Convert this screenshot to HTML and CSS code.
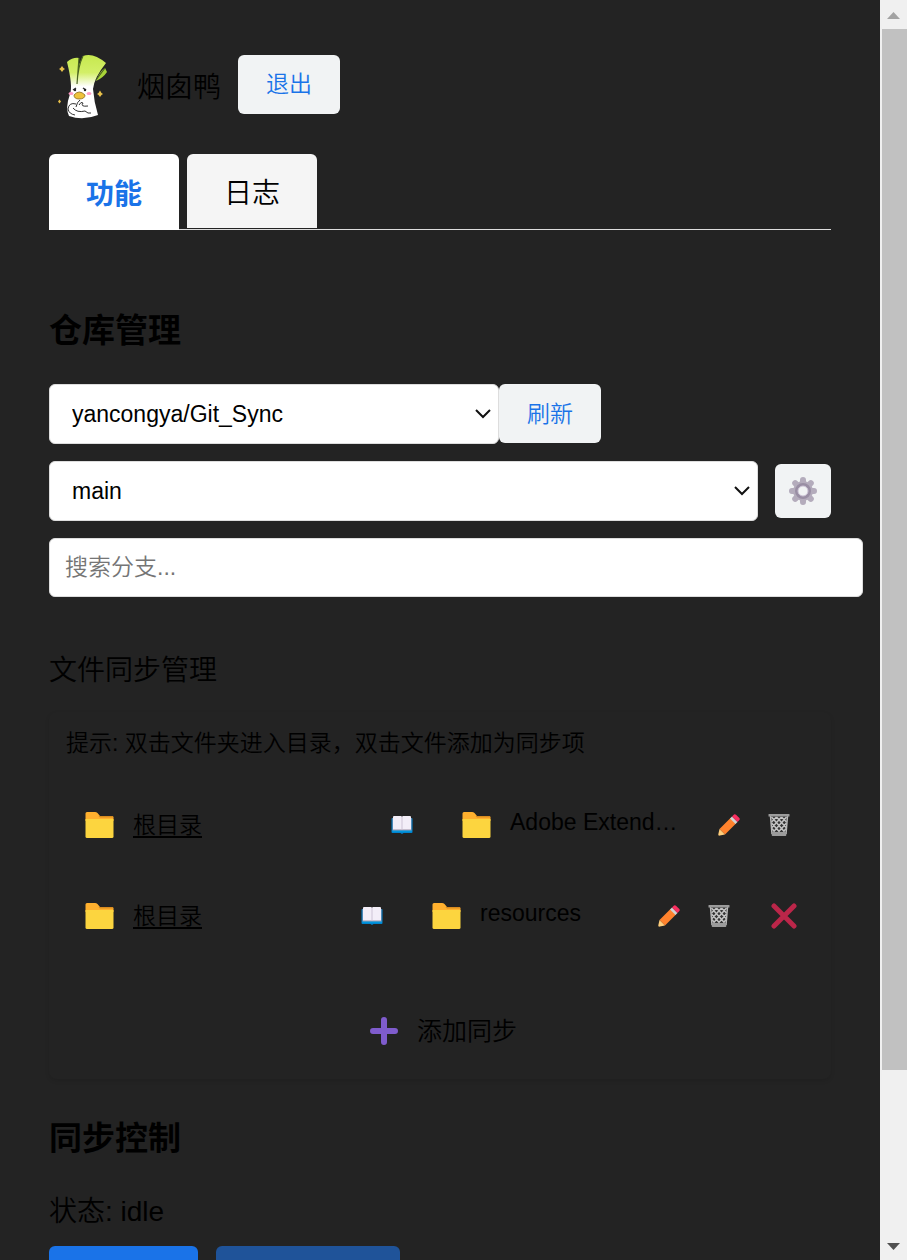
FILE: index.html
```
<!DOCTYPE html>
<html lang="zh-CN">
<head>
<meta charset="utf-8">
<title>Git Sync</title>
<link rel="stylesheet" href="styles.css">
</head>
<body>
<svg class="sprite" aria-hidden="true">
  <symbol id="folder" viewBox="0 0 28 26">
    <path d="M0 9V1.5Q0 0 1.5 0H9.5Q11 0 12 1L14.5 4H26.5Q28 4 28 5.5V9Z" fill="#ffb02e"/>
    <path d="M13 4H26.5Q28 4 28 5.5H14.5Z" fill="#d98b1f"/>
    <path d="M0 7H28V24.5Q28 26 26.500 26H1.500Q0 26 0 24.500Z" fill="#fcd53f"/>
  </symbol>
  <symbol id="book" viewBox="0 0 21 18">
    <path d="M0 3Q0 2 1 2H20Q21 2 21 3V16Q21 17 20 17H12L10.500 18L9 17H1Q0 17 0 16Z" fill="#0084ce"/>
    <path d="M1 14H20V15.500H1Z" fill="#00a6ed"/>
    <path d="M1 2H20V14.500H1Z" fill="#998ea4"/>
    <path d="M1.500 1Q1.500 0 2.500 0H9.500L10.500 .7L11.500 0H18.500Q19.500 0 19.500 1V13.500H1.500Z" fill="#f3eef8"/>
    <path d="M10.500 .7V13.500" stroke="#cdc4d6" stroke-width="1"/>
  </symbol>
  <symbol id="pencil" viewBox="0 0 22 22">
    <path d="M1.500 15L12.500 4L18 9.500L7 20.500Z" fill="#ff822d"/>
    <path d="M1.500 15L7 20.500L1.800 21.600Q0 22 .3 20.200Z" fill="#ffce7c"/>
    <path d="M12 4.500L14 2.500L19.500 8L17.500 10Z" fill="#d3d3d3"/>
    <path d="M14 2.500L16 .5Q17 -.3 18 .7L21.300 4Q22.200 5 21.400 6L19.500 8Z" fill="#f92f60"/>
  </symbol>
  <symbol id="trash" viewBox="0 0 21 22">
    <path d="M2 2H19L17.500 19.500H3.500Z" fill="#343434"/>
    <path d="M3 8L8 3M3 14L13 3M4 19L18 3M9 19L18 9M14 19L18 14M18 8L13 3M18 14L8 3M17 19L3 3M12 19L3 9M7 19L3 14" stroke="#c4c4c4" stroke-width="1.500"/>
    <path d="M2 2L3.500 20M19 2L17.500 20" stroke="#b8b8b8" stroke-width="1.500"/>
    <path d="M3 18H18L17.800 21Q17.700 22 17 22H4Q3.300 22 3.200 21Z" fill="#9b9b9b"/>
    <path d="M0 .5Q0 0 .5 0H20.500Q21 0 21 .5V2.500H0Z" fill="#9b9b9b"/>
  </symbol>
</svg>
<div class="app">
  <main class="page">
    <header class="user">
      <svg class="avatar" viewBox="0 0 70 80" role="img" aria-label="头像">
        <defs>
          <linearGradient id="leaf" x1="0" y1="0" x2="0" y2="1"><stop offset="0" stop-color="#c6e84e"/><stop offset=".28" stop-color="#d3ef68"/><stop offset=".5" stop-color="#fff"/><stop offset="1" stop-color="#fff"/></linearGradient>
        </defs>
        <path d="M48 33Q51 25 56 22L58 26Q54 32 47 35Z" fill="#a9d438"/>
        <path d="M18 16Q24 11 30 12L29 21L34 10Q44 6 57 17Q45 32 44 43Q45 56 49 69Q34 75 20 70Q16 62 21 48Q24 40 18 16Z" fill="url(#leaf)"/>
        <path d="M30 12L28 38M34 10Q29 20 28 38M56 22L47 34" fill="none" stroke="#4b6520" stroke-width="1.200"/>
        <ellipse cx="22" cy="47.500" rx="2.500" ry="1.500" fill="#ff9cc5"/><ellipse cx="40" cy="47.500" rx="2.500" ry="1.500" fill="#ff9cc5"/>
        <path d="M24 44L27 42M34 42L37 44" stroke="#333" stroke-width="1.500"/><circle cx="26" cy="44" r="1.200" fill="#222"/><circle cx="36" cy="44" r="1.200" fill="#222"/>
        <path d="M25 49Q30 43 36 49Q36 53 30 53Q25 53 25 49Z" fill="#efc23b" stroke="#8e6b20" stroke-width=".8"/>
        <path d="M31 54Q28 56 27 61M30 59Q32 55 34 57Q31 61 39 60M27 58Q20 56 19 63Q20 68 26 69M24 62Q28 67 36 65Q39 68 42 67" fill="none" stroke="#333" stroke-width="1"/>
        <path d="M13 20L14.500 22L16 23L14.500 24L13 26L11.500 24L10 23L11.500 22ZM51 44.500L52.500 47L54 48L52.500 49L51 51L49.500 49L48 48L49.500 47ZM10.500 53.500L12 55.500L10.500 57.500L9 55.500Z" fill="#e8c14a"/>
      </svg>
      <span class="user-name">烟囱鸭</span>
      <button class="btn" type="button">退出</button>
    </header>

    <nav class="tabs" role="tablist">
      <button class="tab tab-active" type="button" role="tab" aria-selected="true">功能</button>
      <button class="tab" type="button" role="tab" aria-selected="false">日志</button>
    </nav>

    <section class="repo">
      <h2 class="title">仓库管理</h2>
      <div class="repo-row">
        <select class="field repo-select" aria-label="仓库"><option>yancongya/Git_Sync</option></select>
        <button class="btn" type="button">刷新</button>
      </div>
      <div class="branch-row">
        <select class="field branch-select" aria-label="分支"><option>main</option></select>
        <button class="btn-icon" type="button" aria-label="设置">
          <svg width="28" height="28" viewBox="-14 -14 28 28">
            <path d="M0 -11V11M-11 0H11M-7.800 -7.800L7.800 7.800M-7.800 7.800L7.800 -7.800" stroke="#b4acbc" stroke-width="6" stroke-linecap="round"/>
            <circle r="10" fill="#b4acbc"/><circle r="6.500" fill="#f1f3f4" stroke="#998ea4" stroke-width="3"/><circle r="5" fill="none" stroke="#cdc4d6" stroke-width="1"/>
          </svg>
        </button>
      </div>
      <input class="field search" type="text" placeholder="搜索分支..." aria-label="搜索分支">
    </section>

    <section>
      <h3 class="subtitle">文件同步管理</h3>
      <div class="card">
        <p class="tip">提示: 双击文件夹进入目录，双击文件添加为同步项</p>
        <div class="sync-row">
          <div class="pair">
            <div class="side">
              <svg class="folder"><use href="#folder"/></svg><a class="path" href="#root">根目录</a>
              <button class="plain" type="button" aria-label="浏览"><svg class="book"><use href="#book"/></svg></button>
            </div>
            <div class="side">
              <svg class="folder"><use href="#folder"/></svg><span class="name">Adobe Extend…</span>
              <button class="plain" type="button" aria-label="编辑"><svg class="tool"><use href="#pencil"/></svg></button>
              <button class="plain trash" type="button" aria-label="清空"><svg class="tool"><use href="#trash"/></svg></button>
            </div>
          </div>
        </div>
        <div class="sync-row">
          <div class="pair">
            <div class="side">
              <svg class="folder"><use href="#folder"/></svg><a class="path" href="#root">根目录</a>
              <button class="plain" type="button" aria-label="浏览"><svg class="book"><use href="#book"/></svg></button>
            </div>
            <div class="side">
              <svg class="folder"><use href="#folder"/></svg><span class="name">resources</span>
              <button class="plain" type="button" aria-label="编辑"><svg class="tool"><use href="#pencil"/></svg></button>
              <button class="plain trash" type="button" aria-label="清空"><svg class="tool"><use href="#trash"/></svg></button>
            </div>
          </div>
          <button class="plain remove" type="button" aria-label="移除"><svg width="26" height="26" viewBox="0 0 26 26"><path d="M3 3L23 23M23 3L3 23" stroke="#bb2649" stroke-width="5" stroke-linecap="round"/></svg></button>
        </div>
        <button class="plain add" type="button"><svg width="28" height="28" viewBox="0 0 28 28"><path d="M14 3V25M3 14H25" stroke="#7f5ccd" stroke-width="6" stroke-linecap="round"/></svg>添加同步</button>
      </div>
    </section>

    <section>
      <h2 class="title">同步控制</h2>
      <p class="status">状态: idle</p>
      <div class="actions">
        <button class="action upload" type="button" aria-label="上传"></button>
        <button class="action download" type="button" aria-label="下载" disabled></button>
      </div>
    </section>
  </main>
  <div class="scrollbar" aria-hidden="true">
    <svg class="arrow" viewBox="0 0 27 29"><path d="M7 19L13.500 12L20 19Z" fill="#a3a3a3"/></svg>
    <div class="track"><div class="thumb"></div></div>
    <svg class="arrow" viewBox="0 0 27 29"><path d="M7 12L13.500 19L20 12Z" fill="#505050"/></svg>
  </div>
</div>
</body>
</html>
```
FILE: styles.css
```
* { box-sizing: border-box; }
body {
  margin: 0;
  background: #232323;
  color: #000;
  font-family: "Liberation Sans", "Noto Sans CJK SC", sans-serif;
  font-weight: 350;
  font-size: 28px;
  line-height: 40px;
}
button, select, input { font: inherit; color: inherit; margin: 0; }
h2, h3, p { margin: 0; }
.sprite { display: none; }
.app { display: flex; height: 100vh; overflow: hidden; }
.page { flex: 1; min-width: 0; overflow: hidden; padding: 46px 49px 0; }

.user { display: flex; align-items: center; height: 80px; }
.avatar { width: 70px; height: 80px; margin-right: 18px; }
.user-name { margin-right: 17px; padding-top: 4px; }
.user .btn { margin-bottom: 4px; }
.btn {
  height: 59px;
  padding: 0 28px;
  border: 0;
  border-radius: 6px;
  background: #f1f3f4;
  color: #1a73e8;
  font-size: 23px;
}

.tabs { display: flex; align-items: flex-start; gap: 8px; height: 76px; margin-top: 28px; border-bottom: 1px solid #ddd; }
.tab { width: 130px; height: 74px; padding: 6px 0 0; border: 0; border-radius: 6px 6px 0 0; background: #f5f5f5; }
.tab-active { height: 76px; background: #fff; color: #1a73e8; font-weight: 700; }

.title { font-size: 33px; font-weight: 700; line-height: 48px; }
.repo { margin-top: 77px; }
.repo-row { display: flex; align-items: flex-start; margin-top: 29px; }
.field {
  display: block;
  height: 60px;
  border: 1px solid #ddd;
  border-radius: 6px;
  background: #fff;
  font-size: 23px;
}
select.field {
  appearance: none;
  padding: 0 40px 0 22px;
  background: #fff url("data:image/svg+xml,%3Csvg xmlns='http://www.w3.org/2000/svg' width='16' height='10'%3E%3Cpath d='M1 1L8 8L15 1' fill='none' stroke='%23111' stroke-width='2'/%3E%3C/svg%3E") no-repeat right 7px center;
}
.repo-select { width: 450px; }
.branch-row { display: flex; align-items: center; gap: 17px; margin: 17px 0; }
.branch-select { flex: 1; min-width: 0; }
.btn-icon { display: grid; place-items: center; width: 56px; height: 54px; padding: 0; border: 0; border-radius: 6px; background: #f1f3f4; }
.search { width: calc(100% + 32px); height: 59px; padding: 0 15px; }
.search::placeholder { color: #757575; }

.subtitle { margin-top: 54px; font-size: 28px; font-weight: 350; }
.card { margin: 21px 0 36px; padding: 14px 0 22px; border-radius: 8px; box-shadow: 0 2px 4px rgba(0, 0, 0, .1); }
.tip { padding: 0 17px; font-size: 23px; line-height: 34px; margin-bottom: 19px; }
.sync-row { display: flex; align-items: center; height: 91px; padding: 0 34px 0 36px; font-size: 23px; }
.pair { flex: 1; min-width: 0; display: grid; grid-template-columns: 1fr 1fr; gap: 49px; padding-right: 7px; }
.side { display: flex; align-items: center; min-width: 0; }
.folder { flex: none; width: 29px; height: 26px; margin-right: 19px; }
.path { flex: 1; color: #000; text-underline-offset: 3px; text-decoration-thickness: 2px; }
.name { flex: 1; min-width: 0; white-space: nowrap; padding-bottom: 5px; }
.plain { display: flex; align-items: center; padding: 0; border: 0; background: none; }
.book { width: 22px; height: 18px; }
.tool { width: 22px; height: 22px; }
.trash { margin-left: 28px; }
.remove { margin-left: 34px; }
.add { margin: 44px auto 0; padding-left: 7px; gap: 19px; height: 52px; font-size: 25px; }

.status { margin: 29px 0 14px; }
.actions { display: flex; gap: 18px; }
.action { height: 59px; border: 0; border-radius: 6px; background: #1a73e8; }
.upload { width: 149px; }
.download { width: 184px; background: #1f5399; }

.scrollbar { display: flex; flex-direction: column; width: 27px; background: #f0f0f0; }
.arrow { flex: none; width: 27px; height: 29px; }
.track { flex: 1; padding-left: 2px; }
.thumb { height: 86.6%; background: #c1c1c1; }
```
